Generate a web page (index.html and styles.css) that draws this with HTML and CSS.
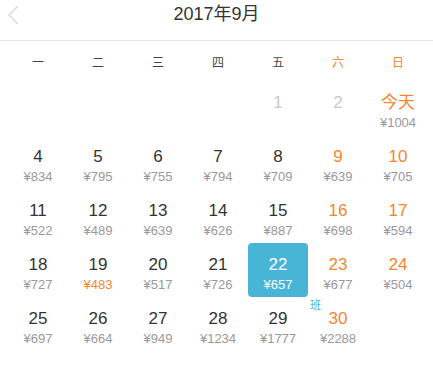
FILE: index.html
```html
<!DOCTYPE html>
<html lang="zh-CN">
<head>
<meta charset="utf-8">
<title>2017年9月</title>
<link rel="stylesheet" href="styles.css">
</head>
<body>
<div class="calendar">
  <header class="nav">
    <span class="back">
      <svg width="12" height="20" viewBox="0 0 12 20"><path d="M11 1 L2 10 L11 19" fill="none" stroke="#dcdcdc" stroke-width="1.6"/></svg>
    </span>
    <h1 class="title">2017年9月</h1>
    <span></span>
  </header>
  <div class="weekdays">
    <span>一</span><span>二</span><span>三</span><span>四</span><span>五</span><span class="wk">六</span><span class="wk">日</span>
  </div>
  <div class="grid">
    <div class="cell"></div>
    <div class="cell"></div>
    <div class="cell"></div>
    <div class="cell"></div>
    <div class="cell past"><span class="d">1</span></div>
    <div class="cell past"><span class="d">2</span></div>
    <div class="cell wk"><span class="d">今天</span><span class="p">¥1004</span></div>

    <div class="cell"><span class="d">4</span><span class="p">¥834</span></div>
    <div class="cell"><span class="d">5</span><span class="p">¥795</span></div>
    <div class="cell"><span class="d">6</span><span class="p">¥755</span></div>
    <div class="cell"><span class="d">7</span><span class="p">¥794</span></div>
    <div class="cell"><span class="d">8</span><span class="p">¥709</span></div>
    <div class="cell wk"><span class="d">9</span><span class="p">¥639</span></div>
    <div class="cell wk"><span class="d">10</span><span class="p">¥705</span></div>

    <div class="cell"><span class="d">11</span><span class="p">¥522</span></div>
    <div class="cell"><span class="d">12</span><span class="p">¥489</span></div>
    <div class="cell"><span class="d">13</span><span class="p">¥639</span></div>
    <div class="cell"><span class="d">14</span><span class="p">¥626</span></div>
    <div class="cell"><span class="d">15</span><span class="p">¥887</span></div>
    <div class="cell wk"><span class="d">16</span><span class="p">¥698</span></div>
    <div class="cell wk"><span class="d">17</span><span class="p">¥594</span></div>

    <div class="cell"><span class="d">18</span><span class="p">¥727</span></div>
    <div class="cell"><span class="d">19</span><span class="p low">¥483</span></div>
    <div class="cell"><span class="d">20</span><span class="p">¥517</span></div>
    <div class="cell"><span class="d">21</span><span class="p">¥726</span></div>
    <div class="cell selected"><span class="d">22</span><span class="p">¥657</span></div>
    <div class="cell wk"><span class="d">23</span><span class="p">¥677</span></div>
    <div class="cell wk"><span class="d">24</span><span class="p">¥504</span></div>

    <div class="cell"><span class="d">25</span><span class="p">¥697</span></div>
    <div class="cell"><span class="d">26</span><span class="p">¥664</span></div>
    <div class="cell"><span class="d">27</span><span class="p">¥949</span></div>
    <div class="cell"><span class="d">28</span><span class="p">¥1234</span></div>
    <div class="cell"><span class="d">29</span><span class="p">¥1777</span></div>
    <div class="cell wk"><span class="tag">班</span><span class="d">30</span><span class="p">¥2288</span></div>
    <div class="cell"></div>
  </div>
</div>
</body>
</html>
```
FILE: styles.css
```css
html, body {
  margin: 0;
  padding: 0;
  background: #fff;
}
body {
  font-family: "Liberation Sans", "Noto Sans CJK SC", sans-serif;
  color: #333;
}
.calendar {
  width: 433px;
}
.nav {
  height: 40px;
  border-bottom: 1px solid #e2e2e2;
  display: grid;
  grid-template-columns: 1fr auto 1fr;
  align-items: start;
}
.back {
  padding: 5px 0 0 7px;
  display: flex;
}
.title {
  margin: 0;
  font-size: 18px;
  font-weight: normal;
  line-height: 28px;
  color: #333;
}
.weekdays {
  display: grid;
  grid-template-columns: repeat(7, 60px);
  padding: 0 5px 0 8px;
  height: 40px;
  align-items: center;
  font-size: 12px;
  color: #444;
}
.weekdays span {
  text-align: center;
}
.weekdays .wk {
  color: #f7852b;
}
.grid {
  display: grid;
  grid-template-columns: repeat(7, 60px);
  grid-auto-rows: 54px;
  padding: 0 5px 0 8px;
}
.cell {
  position: relative;
  display: flex;
  flex-direction: column;
  align-items: center;
  padding-top: 12px;
  box-sizing: border-box;
  border-radius: 4px;
}
.d {
  font-size: 17px;
  line-height: 20px;
  color: #333;
}
.p {
  font-size: 13px;
  line-height: 16px;
  margin-top: 2px;
  color: #999;
}
.p.low {
  color: #f7852b;
}
.cell.wk .d {
  color: #f7852b;
}
.cell.past .d {
  color: #c8c8c8;
}
.cell.selected {
  background: #48b5d6;
}
.cell.selected .d,
.cell.selected .p {
  color: #fff;
}
.tag {
  position: absolute;
  left: 2px;
  top: 2px;
  font-size: 11px;
  line-height: 13px;
  color: #48b5d6;
}
```
